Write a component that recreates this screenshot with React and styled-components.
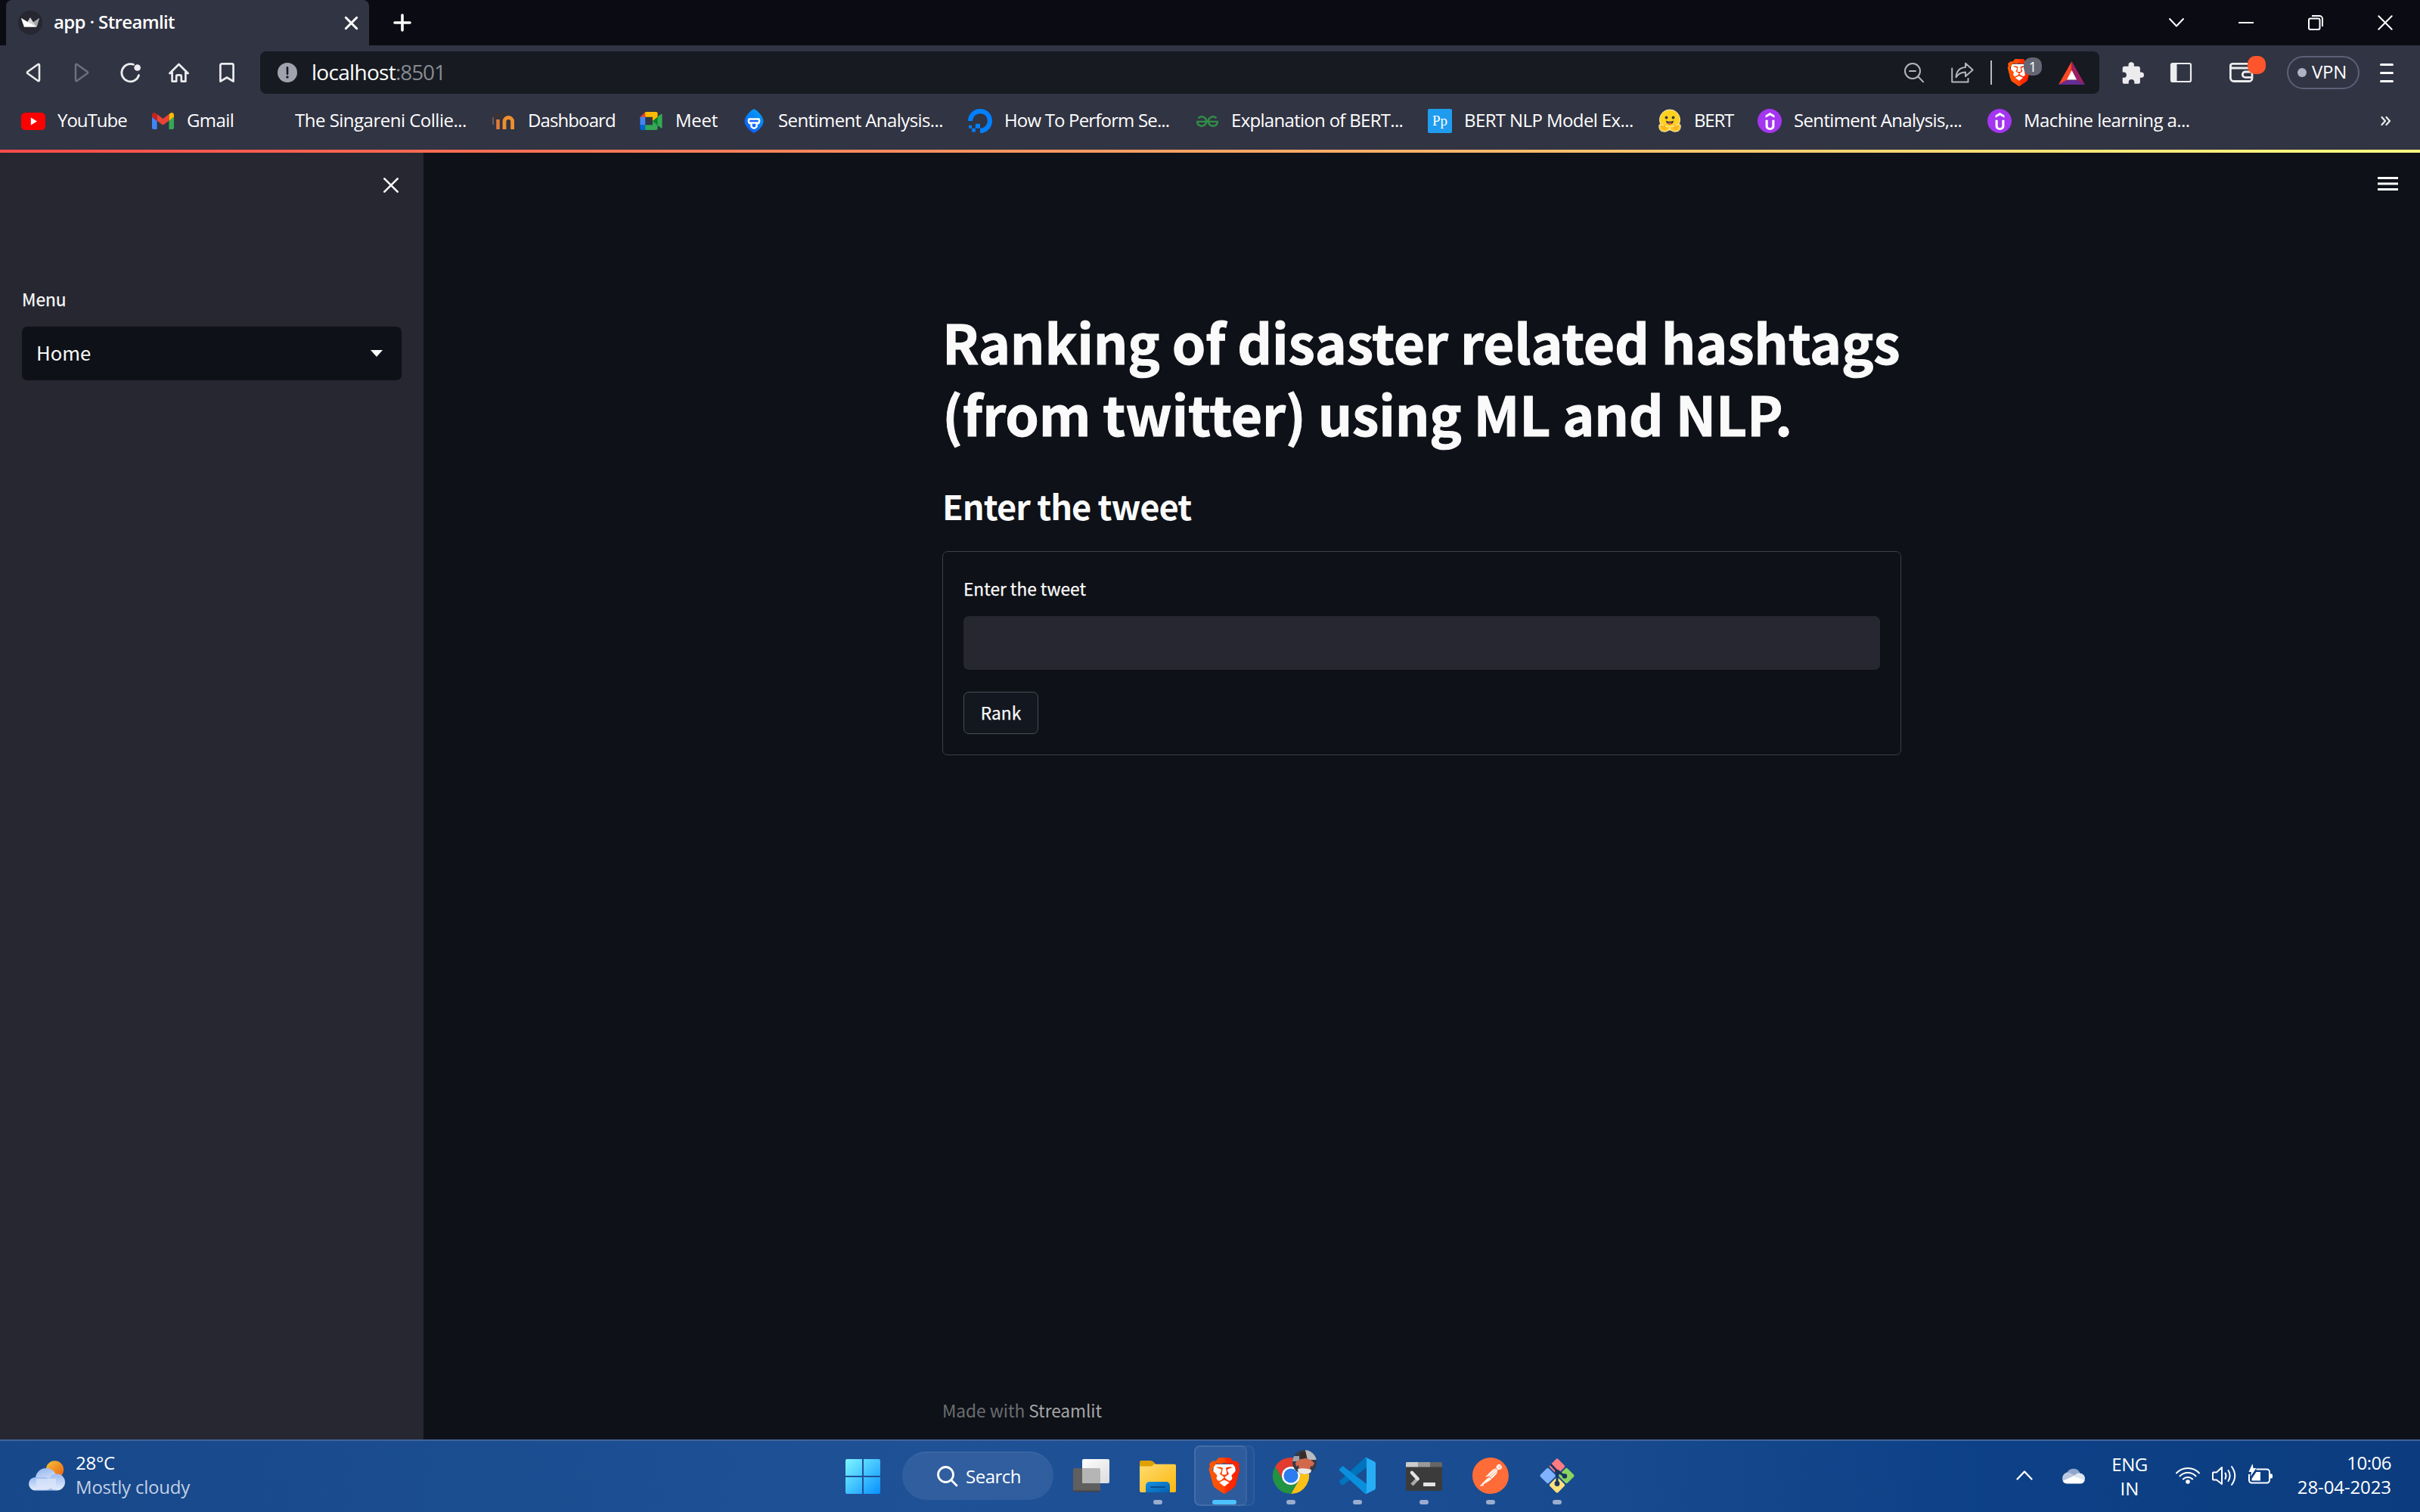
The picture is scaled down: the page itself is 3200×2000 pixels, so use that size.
import React from "react";
import styled, { createGlobalStyle, css } from "styled-components";
import { SiBrave, SiPostman, SiDigitalocean, SiGeeksforgeeks, SiUdemy } from "react-icons/si";

const uiFont = '"Open Sans", "Noto Sans", sans-serif';
const appFont = '"Noto Sans CJK SC", "Noto Sans", sans-serif';

const GlobalStyle = createGlobalStyle`
  * { box-sizing: border-box; }
  html, body { margin: 0; padding: 0; background: #0e1117; }
  body { font-family: ${uiFont}; color: #fff; overflow: hidden; }
  svg { display: block; flex: none; overflow: visible; }
`;

/* ---------- shell ---------- */

const Screen = styled.div`
  width: 3200px;
  height: 2000px;
  display: flex;
  flex-direction: column;
`;

const Label = styled.span`
  font-family: ${uiFont};
  font-size: ${(p) => p.$size || 24}px;
  font-weight: ${(p) => p.$weight || 400};
  letter-spacing: ${(p) => p.$track || 0}px;
  color: ${(p) => p.$color || "#fff"};
  line-height: 32px;
  padding-bottom: 2px;
  white-space: pre;
`;

/* ---------- tab strip ---------- */

const TabStrip = styled.div`
  flex: none;
  height: 60px;
  background: #0b0b14;
  display: flex;
  align-items: center;
  padding: 0 36px 0 8px;
`;

const Tab = styled.div`
  width: 480px;
  height: 60px;
  border-radius: 8px 8px 0 0;
  background: #313443;
  display: flex;
  align-items: center;
  padding: 0 15px 0 16px;
`;

const TabTitle = styled(Label)`
  flex: 1;
  margin-left: 15px;
`;

const NewTab = styled.div`
  margin-left: 32px;
`;

const WindowButtons = styled.div`
  margin-left: auto;
  display: flex;
  gap: 72px;
  align-items: center;
`;

/* ---------- toolbar ---------- */

const Toolbar = styled.div`
  flex: none;
  height: 72px;
  background: #313443;
  display: flex;
  align-items: center;
  padding: 0 0 0 12px;
`;

const ToolButton = styled.div`
  width: 64px;
  height: 56px;
  display: flex;
  align-items: center;
  justify-content: center;
  color: ${(p) => (p.$dim ? "#6c6f7d" : "#ececee")};
  margin-left: ${(p) => p.$gap || 0}px;
  position: relative;
`;

const AddressBar = styled.div`
  width: 2432px;
  height: 56px;
  margin-left: 12px;
  border-radius: 8px;
  background: #171a21;
  display: flex;
  align-items: center;
  padding: 0 19px 0 23px;
`;

const Address = styled.div`
  flex: 1;
  display: flex;
  margin-left: 19px;
`;

const AddressActions = styled.div`
  display: flex;
  align-items: center;
  color: #b4b5b9;
`;

const Slot = styled.div`
  margin-left: ${(p) => p.$gap || 0}px;
  position: relative;
`;

const BarDivider = styled.div`
  width: 2px;
  height: 32px;
  background: #b9babf;
  margin-left: 22px;
`;

const CountBadge = styled.div`
  position: absolute;
  left: 24px;
  top: -2px;
  width: 24px;
  height: 24px;
  border-radius: 10px;
  background: #646773;
  color: #fff;
  font: 18px/24px ${uiFont};
  text-align: center;
`;

const AlertBadge = styled.div`
  position: absolute;
  left: 40px;
  top: 6px;
  width: 24px;
  height: 24px;
  border-radius: 10px;
  background: #ff552c;
`;

const VpnPill = styled.div`
  margin-left: 28px;
  width: 96px;
  height: 44px;
  border: 2px solid #5d6078;
  border-radius: 22px;
  display: flex;
  align-items: center;
  padding-left: 12px;
  gap: 7px;
`;

const VpnDot = styled.i`
  width: 12px;
  height: 12px;
  border-radius: 50%;
  background: #b0b2c4;
`;

/* ---------- bookmarks ---------- */

const BookmarkBar = styled.div`
  flex: none;
  height: 66px;
  background: #313443;
  display: flex;
  padding: 0 38px 10px 28px;
`;

const Bookmark = styled.div`
  width: ${(p) => p.$width}px;
  display: flex;
  align-items: center;
  gap: ${(p) => p.$gap || 16}px;
`;

const MoreBookmarks = styled.div`
  margin-left: auto;
  align-self: center;
`;

const Letterpress = styled.div`
  width: 32px;
  height: 32px;
  border-radius: 2px;
  background: #209cee;
  color: #fff;
  font: 19px/31px "Liberation Serif", serif;
  text-align: center;
`;

const RoundMark = styled.div`
  width: 32px;
  height: 32px;
  border-radius: 50%;
  background: #a435f0;
  color: #fff;
  display: flex;
  align-items: center;
  justify-content: center;
`;

/* ---------- page ---------- */

const Decoration = styled.div`
  flex: none;
  height: 4px;
  background: linear-gradient(90deg, #ff4b4b, #fffd80);
`;

const Page = styled.div`
  flex: 1;
  display: flex;
  min-height: 0;
  font-family: ${appFont};
`;

const Sidebar = styled.aside`
  width: 560px;
  background: #262730;
  padding: 33px 29px 0;
  display: flex;
  flex-direction: column;
`;

const SidebarClose = styled.div`
  align-self: flex-end;
  margin: 0 4px 121px 0;
`;

const appText = css`
  font-family: ${appFont};
  color: #fafafa;
  white-space: pre;
`;

const FieldLabel = styled.label`
  ${appText}
  display: block;
  font-size: 22.7px;
  line-height: 40px;
  margin-bottom: 16px;
  -webkit-text-stroke: 0.25px currentColor;
`;

const Select = styled.div`
  ${appText}
  height: 71px;
  border-radius: 7px;
  background: #0e1117;
  display: flex;
  align-items: center;
  justify-content: space-between;
  padding: 0 25px 0 19px;
  font-size: 25.7px;
`;

const SelectValue = styled.span`
  line-height: 40px;
  padding-bottom: 3px;
`;

const Main = styled.main`
  flex: 1;
  background: #0e1117;
  display: flex;
  flex-direction: column;
`;

const MainHeader = styled.div`
  display: flex;
  justify-content: flex-end;
  padding: 32px 29px 0;
  margin-bottom: 152px;
`;

const Column = styled.div`
  width: 1268px;
  margin: 0 auto;
`;

const Title = styled.h1`
  ${appText}
  margin: 0 0 45px;
  font-size: 71.3px;
  font-weight: 700;
  line-height: 95px;
  letter-spacing: -0.16px;
  -webkit-text-stroke: 1px currentColor;
`;

const Subtitle = styled.h3`
  ${appText}
  margin: 0 0 30px;
  font-size: 45.2px;
  font-weight: 700;
  line-height: 60px;
  letter-spacing: -1px;
`;

const Form = styled.div`
  border: 1px solid #3e3f43;
  border-radius: 7px;
  padding: 29px 27px 27px;
`;

const TextInput = styled.div`
  height: 71px;
  border-radius: 7px;
  background: #262730;
`;

const SubmitButton = styled.div`
  ${appText}
  width: 99px;
  height: 56px;
  margin-top: 29px;
  padding-bottom: 1px;
  border: 1px solid #4a4d55;
  border-radius: 7px;
  background: #131720;
  display: flex;
  align-items: center;
  justify-content: center;
  font-size: 22.7px;
  -webkit-text-stroke: 0.25px currentColor;
`;

const Footer = styled(Column)`
  ${appText}
  margin-top: auto;
  padding-bottom: 18px;
  font-size: 22.7px;
  line-height: 40px;
  letter-spacing: -0.05px;
  color: #6b6d71;
`;

const FooterLink = styled.span`
  color: #a5a6a8;
`;

/* ---------- taskbar ---------- */

const Taskbar = styled.div`
  flex: none;
  height: 96px;
  border-top: 2px solid #41639a;
  background: linear-gradient(90deg, #17488a 0%, #1f5197 38%, #1d4f95 52%, #174a8e 66%, #0d4187 82%, #0c3c7f 100%);
  display: flex;
`;

const Weather = styled.div`
  width: 1118px;
  padding: 13px 0 0 38px;
  display: flex;
  gap: 14px;
`;

const WeatherIcon = styled.div`
  padding-top: 13px;
`;

const Stack = styled.div`
  display: flex;
  flex-direction: column;
  align-items: ${(p) => p.$align || "flex-start"};
  ${Label} { padding-bottom: 0; }
`;

const StartButton = styled.div`
  width: 46px;
  padding-top: 24px;
`;

const SearchPill = styled.div`
  width: 200px;
  height: 64px;
  margin: 14px 6px 0 29px;
  border-radius: 32px;
  background: rgba(255, 255, 255, 0.08);
  border-top: 2px solid rgba(255, 255, 255, 0.05);
  display: flex;
  align-items: center;
  padding-left: 46px;
  gap: 10px;
  ${Label} { padding-bottom: 0; }
`;

const AppSlot = styled.div`
  width: 88px;
  display: flex;
  flex-direction: column;
  align-items: center;
  padding-top: 22px;
  position: relative;
`;

const ActiveTile = styled.div`
  position: absolute;
  left: 4px;
  top: 6px;
  width: ${(p) => (p.$back ? 80 : 70)}px;
  height: 80px;
  border-radius: 8px;
  border: 2px solid rgba(255, 255, 255, 0.06);
  background: rgba(255, 255, 255, ${(p) => (p.$back ? 0.025 : 0.05)});
`;

const AppIcon = styled.div`
  width: 48px;
  height: 48px;
  position: relative;
`;

const Running = styled.div`
  margin-top: 8px;
  width: ${(p) => (p.$active ? 32 : 12)}px;
  height: 6px;
  border-radius: 3px;
  background: ${(p) => (p.$active ? "#4cc2ff" : "#9badcf")};
  position: relative;
`;

const Avatar = styled.div`
  position: absolute;
  left: 26px;
  top: -10px;
  width: 32px;
  height: 32px;
  border-radius: 50%;
  overflow: hidden;
`;

const Tray = styled.div`
  margin-left: auto;
  padding-right: 38px;
  display: flex;
`;

const TrayItem = styled.div`
  width: ${(p) => p.$width}px;
  margin-left: ${(p) => p.$gap || 0}px;
  padding-top: ${(p) => p.$top}px;
`;

/* ---------- drawings ---------- */

const stroke = { fill: "none", stroke: "currentColor", strokeLinecap: "round", strokeLinejoin: "round" };

const StreamlitMark = () => (
  <svg width="32" height="32" viewBox="0 0 32 32">
    <circle cx="16" cy="16" r="16" fill="#262730" />
    <path d="M4 10 12 15.5 16 9 20 15.5 28 10 24.5 21.5H8Z" fill="#d5d5d6" />
    <path d="M4 10 24 21.5H8Z" fill="#fff" />
    <path d="M28 10 20 15.5 24.5 21.5Z" fill="#a3a4a6" />
  </svg>
);

const Cross = ({ size, width }) => (
  <svg width={size} height={size} viewBox={`0 0 ${size} ${size}`} {...stroke} stroke="#fff" strokeWidth={width}>
    <path d={`M1.3 1.3 ${size - 1.3} ${size - 1.3}M${size - 1.3} 1.3 1.3 ${size - 1.3}`} />
  </svg>
);

const Plus = () => (
  <svg width="24" height="24" viewBox="0 0 24 24" {...stroke} stroke="#fff" strokeWidth="3.6">
    <path d="M12 2v20M2 12h20" />
  </svg>
);

const Triangle = ({ flip }) => (
  <svg width="20" height="26" viewBox="0 0 20 26" {...stroke} strokeWidth="2.6">
    <path d={flip ? "M2 3.2v19.6c0 1.4 1 1.7 2 .9L17.6 14a1.4 1.4 0 0 0 0-2L4 2.3c-1-.8-2-.5-2 .9Z" : "M18 3.2v19.6c0 1.4-1 1.7-2 .9L2.4 14a1.4 1.4 0 0 1 0-2L16 2.3c1-.8 2-.5 2 .9Z"} />
  </svg>
);

const Reload = () => (
  <svg width="27" height="26" viewBox="0 0 27 26" {...stroke} strokeWidth="2.8">
    <path d="M17.5 2.3A11.6 11.6 0 1 0 24.6 16.5" />
    <circle cx="22.7" cy="6.5" r="4.3" fill="currentColor" stroke="none" />
  </svg>
);

const Home = () => (
  <svg width="27" height="26" viewBox="0 0 27 26" {...stroke} strokeWidth="2.7">
    <path d="M1.4 14 13.5 2 25.6 14M4.6 12V24.6H10.2V17.8a1.5 1.5 0 0 1 1.5-1.5h3.6a1.5 1.5 0 0 1 1.5 1.5V24.6H22.4V12" />
  </svg>
);

const BookmarkGlyph = () => (
  <svg width="20" height="26" viewBox="0 0 20 26" {...stroke} strokeWidth="2.7">
    <path d="M1.4 3.4a2 2 0 0 1 2-2h13.2a2 2 0 0 1 2 2V24.6L10 19.5 1.4 24.6Z" />
  </svg>
);

const InfoMark = () => (
  <svg width="26" height="26" viewBox="0 0 26 26">
    <circle cx="13" cy="13" r="13" fill="#a0a3af" />
    <path d="M13 6.2v8.6" stroke="#171a21" strokeWidth="2.6" strokeLinecap="round" />
    <circle cx="13" cy="19" r="1.7" fill="#171a21" />
  </svg>
);

const ZoomOut = () => (
  <svg width="26" height="26" viewBox="0 0 26 26" {...stroke} strokeWidth="2">
    <circle cx="11" cy="11" r="10" />
    <path d="M7 11h8M18.2 18.2 25 25.2" />
  </svg>
);

const Share = () => (
  <svg width="30" height="28" viewBox="0 0 30 28" {...stroke} strokeWidth="2">
    <path d="M1.2 8.5V26.4H22.5V22" />
    <path d="M19 1.8 28.6 10.5 19 19V13.5C13.5 13.5 9.5 15.5 6.5 20.2 7 12.5 11 7.5 19 7Z" />
  </svg>
);

const BraveMark = ({ size, id }) => (
  <svg width={size} height={size} viewBox="0 0 24 24">
    <defs>
      <linearGradient id={id} x1="0" x2="1">
        <stop offset="0" stopColor="#ff5a00" />
        <stop offset="0.45" stopColor="#ff4a08" />
        <stop offset="0.6" stopColor="#ff2a00" />
        <stop offset="1" stopColor="#ff2000" />
      </linearGradient>
    </defs>
    <path d="M5 4.5H19L19.5 11 15 19 12 20.5 9 19 4.5 11Z" fill="#fff" />
    <SiBrave size={24} fill={`url(#${id})`} />
  </svg>
);

const BatMark = () => (
  <svg width="35" height="31" viewBox="0 0 35 31">
    <path d="M17.5 0 0 31 12 24.5 17.5 13Z" fill="#ff4724" />
    <path d="M17.5 0 35 31 23 24.5 17.5 13Z" fill="#9e1f63" />
    <path d="M0 31H35L23.5 24.5H11.5Z" fill="#662d91" />
    <path d="M17.5 12 24 24.5H11Z" fill="#fff" />
  </svg>
);

const Puzzle = () => (
  <svg width="29" height="29" viewBox="0 0 29 29">
    <path fill="currentColor" d="M8.5 5.8V4a3.7 3.7 0 0 1 7.4 0v1.8h5.4a2.6 2.6 0 0 1 2.6 2.6v5.2h1.5a3.6 3.6 0 0 1 0 7.2h-1.5v5.4a2.6 2.6 0 0 1-2.6 2.6h-5v-2a3.8 3.8 0 0 0-7.6 0v2h-5.4A2.6 2.6 0 0 1 .7 26.2v-5.4h1.6a3.6 3.6 0 0 0 0-7.2H.7V8.4a2.6 2.6 0 0 1 2.6-2.6Z" />
  </svg>
);

const Panel = () => (
  <svg width="28" height="26" viewBox="0 0 28 26">
    <rect x="1" y="1" width="26" height="24" rx="2" fill="none" stroke="currentColor" strokeWidth="2.2" />
    <path d="M1 1H8.5V25H1Z" fill="currentColor" />
  </svg>
);

const Wallet = () => (
  <svg width="32" height="26" viewBox="0 0 32 26" fill="none" stroke="currentColor" strokeWidth="2.8">
    <path d="M1.4 2.5V20a4.5 4.5 0 0 0 4.5 4.5H26a4 4 0 0 0 4-4V10a3 3 0 0 0-3-3H4.5A3 3 0 0 1 1.4 4a3 3 0 0 1 3-2.6H26" />
    <path d="M30 12H21a3.7 3.7 0 0 0 0 7.4H30" />
  </svg>
);

const Bars = ({ w, h, t, round }) => (
  <svg width={w} height={h} viewBox={`0 0 ${w} ${h}`} fill="#fff">
    {[0, (h - t) / 2, h - t].map((y) => (
      <rect key={y} y={y} width={w} height={t} rx={round ? t / 2 : 0} />
    ))}
  </svg>
);

const YouTube = () => (
  <svg width="32" height="23" viewBox="0 0 32 23">
    <rect width="32" height="23" rx="5.5" fill="#f00" />
    <path d="M12.8 6.5 21 11.5 12.8 16.5Z" fill="#fff" />
  </svg>
);

const Gmail = () => (
  <svg width="29" height="22" viewBox="52 42 88 66">
    <path fill="#4285f4" d="M58 108h14V74L52 59v43c0 3.32 2.69 6 6 6" />
    <path fill="#34a853" d="M120 108h14c3.32 0 6-2.69 6-6V59l-20 15" />
    <path fill="#fbbc04" d="M120 48v26l20-15v-8c0-7.42-8.47-11.65-14.4-7.2" />
    <path fill="#ea4335" d="M72 74V48l24 18 24-18v26L96 92" />
    <path fill="#c5221f" d="M52 51v8l20 15V48l-5.6-4.2c-5.94-4.45-14.4-.22-14.4 7.2" />
  </svg>
);

const Meet = () => (
  <svg width="30" height="24" viewBox="0 0 87.5 72">
    <path fill="#00832d" d="M49.5 36l8.53 9.75 11.47 7.33 2-17.02-2-16.64-11.69 6.44z" />
    <path fill="#0066da" d="M0 51.5V66c0 3.315 2.685 6 6 6h14.5l3-10.96-3-9.54-9.95-3z" />
    <path fill="#e94235" d="M20.5 0L0 20.5l10.55 3 9.95-3 2.95-9.41z" />
    <path fill="#4285f4" d="M20.5 20.5H0v31h20.5z" />
    <path fill="#34a853" d="M82.6 8.68L69.5 19.42v33.66l13.16 10.79c1.97 1.54 4.85.135 4.85-2.37V11c0-2.535-2.945-3.925-4.91-2.32zM49.5 36v15.5h-29V72h43c3.315 0 6-2.685 6-6V53.08z" />
    <path fill="#ffba00" d="M63.5 0h-43v20.5h29V36l20-16.57V6c0-3.315-2.685-6-6-6z" />
  </svg>
);

const Moodle = () => (
  <svg width="32" height="24" viewBox="0 0 32 24">
    <path d="M9.5 10V23" fill="none" stroke="#e07a3a" strokeWidth="4.6" />
    <path d="M18 23V12.5a5.300 5 0 0 1 10.6 0V23" fill="none" stroke="#f0902c" strokeWidth="4.8" />
    <path d="M1 6.5 10 2 19 1 14 8 5 9Z" fill="#3a3435" />
    <path d="M3 7V17" stroke="#7d5c4a" strokeWidth="1.8" />
  </svg>
);

const Drop = () => (
  <svg width="28" height="32" viewBox="0 0 28 32">
    <defs>
      <linearGradient id="drop" x1="1" x2="0.3" y1="0" y2="1">
        <stop offset="0" stopColor="#00a8f8" />
        <stop offset="1" stopColor="#0f5cf8" />
      </linearGradient>
    </defs>
    <path d="M14 0C18 2 26 9 26.5 16 27 23 18 30 14 32 10 30 1 23 1.5 16 2 9 10 2 14 0Z" fill="url(#drop)" />
    <path d="M7.5 13.5H20.5Q22 16.5 20 19L17.5 20V23.5Q14 28 10.5 23.5V20L8 19Q6 16.5 7.5 13.5Z" fill="#1766f5" stroke="#fff" strokeWidth="2.4" />
    <path d="M8 18.5H20" stroke="#fff" strokeWidth="2.4" />
  </svg>
);

const Hug = () => (
  <svg width="32" height="32" viewBox="0 0 32 32">
    <circle cx="16" cy="14.5" r="13.5" fill="#ffd21e" stroke="#fff0c0" strokeWidth="1" />
    <path d="M2 21Q1 27 5 29.5 10 31.5 14.5 28.5L16 25 17.5 28.5Q22 31.5 27 29.5 31 27 30 21 26 20 22 23L16 24 10 23Q6 20 2 21Z" fill="#ffc61e" stroke="#fff0c0" strokeWidth="1" />
    <path d="M5 22.5 8.5 27M8.5 21.5 10.5 26M27 22.5 23.5 27M23.5 21.5 21.5 26" stroke="#f0a020" strokeWidth="1.2" strokeLinecap="round" />
    <circle cx="11.5" cy="11.5" r="1.9" fill="#3a3b45" />
    <circle cx="20.5" cy="11.5" r="1.9" fill="#3a3b45" />
    <path d="M10.8 15.5Q16 18 21.2 15.5 20.5 20.5 16 20.5 11.5 20.5 10.8 15.5Z" fill="#3a3b45" />
    <path d="M12.8 19Q16 16.8 19.2 19 18 20.5 16 20.5 14 20.5 12.8 19Z" fill="#ee4b50" />
  </svg>
);

const CloudSun = () => (
  <svg width="48" height="40" viewBox="0 0 48 40">
    <defs>
      <linearGradient id="sun" x1="0" x2="1" y1="0" y2="1">
        <stop offset="0" stopColor="#f3c63a" />
        <stop offset="1" stopColor="#ee5a10" />
      </linearGradient>
      <linearGradient id="cloud" x1="0" x2="0.3" y1="0" y2="1">
        <stop offset="0" stopColor="#8fb3f0" />
        <stop offset="1" stopColor="#eef3fc" />
      </linearGradient>
      <linearGradient id="puff" x1="0" x2="0" y1="0" y2="1">
        <stop offset="0" stopColor="#9dbcf3" />
        <stop offset="1" stopColor="#e6edfa" />
      </linearGradient>
    </defs>
    <circle cx="34.5" cy="12" r="11.7" fill="url(#sun)" />
    <circle cx="23" cy="24" r="14" fill="url(#cloud)" />
    <rect x="0" y="22" width="30" height="17.5" rx="8.7" fill="url(#puff)" />
    <circle cx="37" cy="28.5" r="11" fill="url(#puff)" />
    <path d="M10 24H36V39.5H10Z" fill="#dbe6f9" opacity=".75" />
    <path d="M9 39.3H37" stroke="#6f95dc" strokeWidth="1" />
  </svg>
);

const Start = () => (
  <svg width="46" height="46" viewBox="0 0 46 46">
    <defs>
      <linearGradient id="win" gradientUnits="userSpaceOnUse" x1="0" x2="46" y1="0" y2="46">
        <stop offset="0" stopColor="#7df6ff" />
        <stop offset="1" stopColor="#0890ff" />
      </linearGradient>
    </defs>
    <path fill="url(#win)" d="M2 0H22V22H0V2a2 2 0 0 1 2-2ZM24 0H44a2 2 0 0 1 2 2V22H24ZM0 24H22V46H2a2 2 0 0 1-2-2ZM24 24H46V44a2 2 0 0 1-2 2H24Z" />
  </svg>
);

const Lens = () => (
  <svg width="28" height="28" viewBox="0 0 28 28" {...stroke} stroke="#fff" strokeWidth="2.8">
    <circle cx="11.5" cy="11.5" r="10" />
    <path d="M18.8 18.8 26 26" />
  </svg>
);

const TaskView = () => (
  <svg width="48" height="48" viewBox="0 0 48 48">
    <defs>
      <linearGradient id="tv" x1="0" x2="1" y1="0" y2="1">
        <stop offset="0" stopColor="#fff" />
        <stop offset="1" stopColor="#dcdcdc" />
      </linearGradient>
    </defs>
    <rect x="0" y="14" width="36" height="31" rx="2" fill="#5f5f5f" />
    <path d="M0 43.5H36a2 2 0 0 1-2 2H2a2 2 0 0 1-2-2Z" fill="#444" />
    <rect x="12" y="2" width="36" height="32" rx="2" fill="url(#tv)" />
    <path d="M12 14H34a2 2 0 0 1 2 2V34H14a2 2 0 0 1-2-2Z" fill="#b5b5b5" />
  </svg>
);

const Folder = () => (
  <svg width="48" height="48" viewBox="0 0 48 48">
    <defs>
      <linearGradient id="fold" x1="0" x2="1" y1="0" y2="1">
        <stop offset="0" stopColor="#ffdb70" />
        <stop offset="1" stopColor="#fbb80c" />
      </linearGradient>
      <linearGradient id="clip" x1="0" x2="1" y1="0" y2="1">
        <stop offset="0" stopColor="#1592e0" />
        <stop offset="1" stopColor="#0560b0" />
      </linearGradient>
    </defs>
    <path d="M0 6a2 2 0 0 1 2-2H14.5a5 5 0 0 1 3.5 1.5L21.5 9V14H0Z" fill="#dfa000" />
    <path d="M0 11.5H14.5a4 4 0 0 0 2.8-1L19 8.8H46a2 2 0 0 1 2 2V44a2 2 0 0 1-2 2H2a2 2 0 0 1-2-2Z" fill="url(#fold)" />
    <path d="M8 46V37a5 5 0 0 1 5-5H35a5 5 0 0 1 5 5V46Z" fill="url(#clip)" />
    <path d="M15 39H33" stroke="#0b4c90" strokeWidth="2.2" strokeLinecap="round" />
  </svg>
);

const Chrome = () => (
  <svg width="48" height="48" viewBox="0 0 48 48">
    <path fill="#e33b2e" d="M13.61 30 3.2 12A24 24 0 0 1 44.8 12H24A12 12 0 0 0 13.61 30Z" />
    <path fill="#fbc116" d="M24 12H44.8A24 24 0 0 1 24 48L34.39 30A12 12 0 0 0 24 12Z" />
    <path fill="#229342" d="M34.39 30 24 48A24 24 0 0 1 3.2 12L13.61 30A12 12 0 0 0 34.39 30Z" />
    <circle cx="24" cy="24" r="12" fill="#fff" />
    <circle cx="24" cy="24" r="9.6" fill="#2b7df0" />
  </svg>
);

const Portrait = () => (
  <svg width="32" height="32" viewBox="0 0 32 32">
    <rect width="32" height="32" fill="#343b46" />
    <path d="M17 0H32V13H20Z" fill="#b9bcc0" />
    <path d="M0 8H9V15H0Z" fill="#9da3ac" />
    <path d="M10 4Q15 0 18 5L17 12H11Z" fill="#3b2a26" />
    <path d="M4 17Q8 12 12 12L17 11Q26 12 29 18L26 22 24 21 23 27H9L8 20 5 22Z" fill="#d2694c" />
    <path d="M7 25Q15 23 25 26L24 32H8Z" fill="#e9e8e8" />
  </svg>
);

const VsCode = () => (
  <svg width="48" height="48" viewBox="0 0 100 100">
    <path fill="#0074bc" d="M96.46 10.8L75.86.88C73.47-.27 70.62.21 68.75 2.08L1.3 63.58C-.52 65.24-.51 68.09 1.3 69.75L6.81 74.75C8.3 76.1 10.53 76.2 12.13 74.99L93.36 13.37C96.09 11.3 100 13.25 100 16.67V16.43C100 14.03 98.62 11.84 96.46 10.8Z" />
    <path fill="#0a8fdc" d="M96.46 89.2L75.86 99.12C73.47 100.27 70.62 99.79 68.75 97.92L1.3 36.42C-.52 34.76-.51 31.91 1.3 30.25L6.81 25.25C8.3 23.9 10.53 23.8 12.13 25.01L93.36 86.63C96.09 88.7 100 86.75 100 83.33V83.57C100 85.97 98.62 88.16 96.46 89.2Z" />
    <path fill="#27aef5" d="M75.86 99.13C73.47 100.27 70.62 99.79 68.75 97.92C71.06 100.22 75 98.59 75 95.33V4.67C75 1.41 71.06-.22 68.75 2.08C70.62.21 73.47-.27 75.86.87L96.46 10.78C98.62 11.82 100 14.01 100 16.41V83.59C100 85.99 98.62 88.18 96.46 89.22L75.86 99.13Z" />
  </svg>
);

const Terminal = () => (
  <svg width="48" height="48" viewBox="0 0 48 48">
    <rect x="0" y="6" width="48" height="38" rx="1.5" fill="#3b3b3b" />
    <path d="M0 12.5V7.5A1.5 1.5 0 0 1 1.5 6H16V12.5Z" fill="#ccc" />
    <path d="M16 6H32V12.5H16Z" fill="#999" />
    <path d="M32 6H46.5A1.5 1.5 0 0 1 48 7.5V12.5H32Z" fill="#666" />
    <path d="M8 36 16.5 27" stroke="#aaa" strokeWidth="4.6" />
    <path d="M8 20 15.5 28" stroke="#e4e4e4" strokeWidth="4.6" strokeLinecap="round" />
    <rect x="23" y="33" width="16" height="5" rx=".8" fill="#e4e4e4" />
  </svg>
);

const PostmanMark = () => (
  <svg width="48" height="48" viewBox="0 0 24 24">
    <circle cx="12" cy="12" r="11.5" fill="#fff" />
    <SiPostman size={24} fill="#ff6c37" />
  </svg>
);

const GitMark = () => (
  <svg width="48" height="48" viewBox="0 0 48 48">
    <g transform="rotate(45 24 24)">
      <rect x="7.5" y="7.5" width="15.5" height="15.5" rx="2" fill="#ff7b84" />
      <rect x="25" y="7.5" width="15.5" height="15.5" rx="2" fill="#8bd45e" />
      <rect x="7.5" y="25" width="15.5" height="15.5" rx="2" fill="#80b3ff" />
      <rect x="25" y="25" width="15.5" height="15.5" rx="2" fill="#ffe07a" />
    </g>
    <path d="M15.5 9 24 18V34M24 17 34 25" stroke="#1a3560" strokeWidth="3" fill="none" />
    <circle cx="24" cy="19" r="3" fill="#1a3560" />
    <circle cx="24" cy="34.5" r="3.4" fill="#1a3560" />
    <circle cx="34" cy="24.5" r="3.2" fill="#1a3560" />
  </svg>
);

const OneDrive = () => (
  <svg width="32" height="23" viewBox="0 0 32 23">
    <path d="M8 8.5A9.5 9.5 0 0 1 25.5 8.5L17 14Z" fill="#8ea6cb" />
    <path d="M3.5 20A8 8 0 0 1 9 7.5Q13 7.5 17 11L20 12.5 5 22Z" fill="#b9c8e0" />
    <path d="M18 11.5Q21 8 25 8.5 31.5 9.5 32 15.5 32 18 30.5 20Z" fill="#dde5f1" />
    <path d="M2.5 19 18 12 31.5 18.5Q30 22.5 26 22.5H7.5Q4 22 2.5 19Z" fill="#fff" />
  </svg>
);

const Wifi = () => (
  <svg width="32" height="24" viewBox="0 0 32 24" {...stroke} stroke="#fff" strokeWidth="2">
    <path d="M1 9.5A20.5 20.5 0 0 1 31 9.5M5.5 13.5A14.5 14.5 0 0 1 26.5 13.5M9.8 17.5A8.8 8.8 0 0 1 22.2 17.5" />
    <circle cx="16" cy="21" r="2.8" fill="#fff" stroke="none" />
  </svg>
);

const Volume = () => (
  <svg width="32" height="28" viewBox="0 0 32 28" {...stroke} stroke="#fff" strokeWidth="2">
    <path d="M1 10.5a1 1 0 0 1 1-1H6L13 3V25L6 19.5H2a1 1 0 0 1-1-1ZM17.5 10.5Q19.5 14 17.5 18M21.5 7Q25.8 14 21.5 21M26 2Q34.5 14 26 26" />
  </svg>
);

const Battery = () => (
  <svg width="32" height="28" viewBox="0 0 32 28">
    <path d="M10.5 7.5H24.5a3.5 3.5 0 0 1 3.5 3.5V22a3.5 3.5 0 0 1-3.5 3.5H4.5A3.5 3.5 0 0 1 1 22V14" fill="none" stroke="#fff" strokeWidth="2" />
    <path d="M28.5 13.5H30.5a1.5 1.5 0 0 1 1.5 1.5V18a1.5 1.5 0 0 1-1.5 1.5H28.5Z" fill="#fff" />
    <path d="M5.5 0 .5 11H4L3 17 10.5 6H6.5Z" fill="#fff" />
    <path d="M10.5 11H16V22.5H4.5V20Z" fill="#fff" />
  </svg>
);

/* ---------- content ---------- */

const bookmarks = [
  { text: "YouTube", icon: <YouTube />, width: 173, track: -1 },
  { text: "Gmail", icon: <Gmail />, width: 140, gap: 17, track: -0.6 },
  { text: "The Singareni Collie...", icon: <svg width="32" height="32" />, width: 308, gap: 17, track: -0.5 },
  { text: "Dashboard", icon: <Moodle />, width: 197, gap: 17, track: -0.9 },
  { text: "Meet", icon: <Meet />, width: 137, gap: 17, track: -0.3 },
  { text: "Sentiment Analysis...", icon: <Drop />, width: 297, gap: 18, track: -0.59 },
  { text: "How To Perform Se...", icon: <SiDigitalocean size={32} color="#0080ff" />, width: 302, track: -0.83 },
  { text: "Explanation of BERT...", icon: <SiGeeksforgeeks size={29} color="#2f8d46" />, width: 306, gap: 17, track: -0.7 },
  { text: "BERT NLP Model Ex...", icon: <Letterpress>Pp</Letterpress>, width: 304, track: -0.6 },
  { text: "BERT", icon: <Hug />, width: 132, track: -1.2 },
  { text: "Sentiment Analysis,...", icon: <RoundMark><SiUdemy size={23} /></RoundMark>, width: 304, track: -0.65 },
  { text: "Machine learning a...", icon: <RoundMark><SiUdemy size={23} /></RoundMark>, width: 300, track: -0.56 },
];

const apps = [
  { name: "files", icon: <Folder />, running: true },
  { name: "brave", icon: <BraveMark size={48} id="braveTask" />, running: true, active: true },
  { name: "chrome", icon: <Chrome />, running: true, avatar: true },
  { name: "code", icon: <VsCode />, running: true },
  { name: "terminal", icon: <Terminal />, running: true },
  { name: "postman", icon: <PostmanMark />, running: true },
  { name: "git", icon: <GitMark />, running: true },
];

function Browser() {
  return (
    <>
      <TabStrip>
        <Tab>
          <StreamlitMark />
          <TabTitle $weight={600} $track={-0.63}>app · Streamlit</TabTitle>
          <Cross size={17} width={3} />
        </Tab>
        <NewTab><Plus /></NewTab>
        <WindowButtons>
          <svg width="20" height="12" viewBox="0 0 20 12" {...stroke} stroke="#fff" strokeWidth="2"><path d="M1 1 10 10.5 19 1" /></svg>
          <svg width="20" height="2" viewBox="0 0 20 2"><path d="M0 1H20" stroke="#fff" strokeWidth="2" /></svg>
          <svg width="20" height="20" viewBox="0 0 20 20" fill="none" stroke="#fff" strokeWidth="2">
            <rect x="1" y="4.5" width="14.5" height="14.5" rx="2" />
            <path d="M5 1H15a4 4 0 0 1 4 4V15" />
          </svg>
          <Cross size={20} width={2} />
        </WindowButtons>
      </TabStrip>
      <Toolbar>
        <ToolButton><Triangle /></ToolButton>
        <ToolButton $dim><Triangle flip /></ToolButton>
        <ToolButton><Reload /></ToolButton>
        <ToolButton><Home /></ToolButton>
        <ToolButton><BookmarkGlyph /></ToolButton>
        <AddressBar>
          <InfoMark />
          <Address>
            <Label $size={28} $track={-0.7}>localhost</Label>
            <Label $size={28} $track={-1.1} $color="#868a91">:8501</Label>
          </Address>
          <AddressActions>
            <ZoomOut />
            <Slot $gap={36}><Share /></Slot>
            <BarDivider />
            <Slot $gap={18}>
              <BraveMark size={36} id="braveBar" />
              <CountBadge>1</CountBadge>
            </Slot>
            <Slot $gap={34}><BatMark /></Slot>
          </AddressActions>
        </AddressBar>
        <ToolButton $gap={12}><Puzzle /></ToolButton>
        <ToolButton><Panel /></ToolButton>
        <ToolButton $gap={16}><Wallet /><AlertBadge /></ToolButton>
        <VpnPill><VpnDot /><Label $track={-0.2}>VPN</Label></VpnPill>
        <ToolButton $gap={4}><Bars w={18} h={25} t={3} round /></ToolButton>
      </Toolbar>
      <BookmarkBar>
        {bookmarks.map((b) => (
          <Bookmark key={b.text} $width={b.width} $gap={b.gap}>
            {b.icon}
            <Label $track={b.track}>{b.text}</Label>
          </Bookmark>
        ))}
        <MoreBookmarks>
          <svg width="14" height="12" viewBox="0 0 14 12" {...stroke} stroke="#ececee" strokeWidth="2.2"><path d="M1.5 1 6 6 1.5 11M7.5 1 12 6 7.5 11" /></svg>
        </MoreBookmarks>
      </BookmarkBar>
    </>
  );
}

function StreamlitPage() {
  return (
    <>
      <Decoration />
      <Page>
        <Sidebar>
          <SidebarClose><Cross size={20} width={2.6} /></SidebarClose>
          <FieldLabel>Menu</FieldLabel>
          <Select>
            <SelectValue>Home</SelectValue>
            <svg width="16" height="9" viewBox="0 0 16 9"><path d="M0 0H16L8 9Z" fill="#fafafa" /></svg>
          </Select>
        </Sidebar>
        <Main>
          <MainHeader><Bars w={27} h={18} t={3} /></MainHeader>
          <Column>
            <Title>{"Ranking of disaster related hashtags\n(from twitter) using ML and NLP."}</Title>
            <Subtitle>Enter the tweet</Subtitle>
            <Form>
              <FieldLabel>Enter the tweet</FieldLabel>
              <TextInput />
              <SubmitButton>Rank</SubmitButton>
            </Form>
          </Column>
          <Footer>Made with <FooterLink>Streamlit</FooterLink></Footer>
        </Main>
      </Page>
    </>
  );
}

function WindowsTaskbar() {
  return (
    <Taskbar>
      <Weather>
        <WeatherIcon><CloudSun /></WeatherIcon>
        <Stack>
          <Label $track={-0.2}>28°C</Label>
          <Label $track={-0.2} $color="#c3d0e4">Mostly cloudy</Label>
        </Stack>
      </Weather>
      <StartButton><Start /></StartButton>
      <SearchPill><Lens /><Label $track={-0.5}>Search</Label></SearchPill>
      <AppSlot><AppIcon><TaskView /></AppIcon></AppSlot>
      {apps.map((a) => (
        <AppSlot key={a.name}>
          {a.active && <><ActiveTile $back /><ActiveTile /></>}
          <AppIcon>
            {a.icon}
            {a.avatar && <Avatar><Portrait /></Avatar>}
          </AppIcon>
          {a.running && <Running $active={a.active} />}
        </AppSlot>
      ))}
      <Tray>
        <TrayItem $width={22} $top={39}>
          <svg width="22" height="13" viewBox="0 0 22 13" {...stroke} stroke="#fff" strokeWidth="2.4"><path d="M1.5 11.5 11 1.5 20.5 11.5" /></svg>
        </TrayItem>
        <TrayItem $width={32} $gap={37} $top={34}><OneDrive /></TrayItem>
        <TrayItem $width={46} $gap={36} $top={15}>
          <Stack $align="center"><Label $track={-0.5}>ENG</Label><Label>IN</Label></Stack>
        </TrayItem>
        <TrayItem $width={32} $gap={38} $top={33}><Wifi /></TrayItem>
        <TrayItem $width={32} $gap={16} $top={32}><Volume /></TrayItem>
        <TrayItem $width={32} $gap={16} $top={30}><Battery /></TrayItem>
        <TrayItem $width={124} $gap={33} $top={13}>
          <Stack $align="flex-end"><Label $track={-0.5}>10:06</Label><Label $track={-0.1}>28-04-2023</Label></Stack>
        </TrayItem>
      </Tray>
    </Taskbar>
  );
}

export default function App() {
  return (
    <Screen>
      <GlobalStyle />
      <Browser />
      <StreamlitPage />
      <WindowsTaskbar />
    </Screen>
  );
}
